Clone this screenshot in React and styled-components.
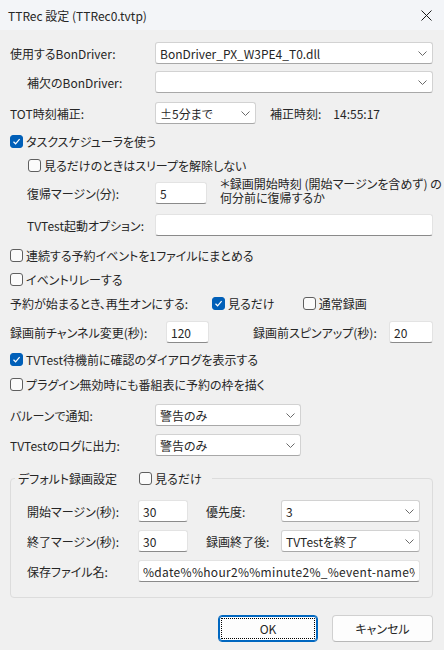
import React from 'react'
import styled, { createGlobalStyle } from 'styled-components'

const GlobalStyle = createGlobalStyle`
  html, body {
    margin: 0;
    padding: 0;
    background: #f0f0f0;
  }
  body {
    font-family: "Noto Sans CJK JP", "Noto Sans", sans-serif;
    font-size: 12px;
    font-weight: 400;
    font-feature-settings: "palt";
    color: #262626;
  }
`

const Window = styled.div`
  width: 444px;
  height: 650px;
  background: #f0f0f0;
  display: flex;
  flex-direction: column;
  overflow: hidden;
`

const TitleBar = styled.div`
  height: 30px;
  flex-shrink: 0;
  display: flex;
  align-items: center;
  justify-content: space-between;
  padding: 0 8px 0 8px;
  background: #f3f5f8;
  font-size: 12px;
`

const CloseButton = styled.span`
  display: inline-flex;
  width: 20px;
  justify-content: center;
`

const Content = styled.div`
  padding: 0 11px 0 10px;
  display: flex;
  flex-direction: column;
`

const Row = styled.div`
  display: flex;
  align-items: center;
  height: ${p => p.$h || 22}px;
  margin-top: ${p => p.$top || 0}px;
  padding-left: ${p => p.$indent || 0}px;
  white-space: nowrap;
`

const Label = styled.span`
  flex: 0 0 ${p => p.$w}px;
  margin-left: ${p => p.$ml || 0}px;
`

const Text = styled.span`
  margin-left: ${p => p.$ml || 0}px;
`

const Field = styled.input`
  box-sizing: border-box;
  height: 22px;
  flex: ${p => (p.$w ? 'none' : '1 1 0')};
  width: ${p => (p.$w ? `${p.$w}px` : 'auto')};
  min-width: 0;
  margin-left: ${p => p.$ml || 0}px;
  border: 1px solid #e3e3e3;
  border-bottom-color: #8a8a8a;
  border-radius: 3px;
  background: #ffffff;
  padding: 0 4px;
  font: inherit;
  font-feature-settings: "palt";
  letter-spacing: ${p => p.$ls || 0}px;
  color: #262626;
  outline: none;
`

const ComboBox = styled.div`
  box-sizing: border-box;
  height: 22px;
  flex: ${p => (p.$w ? 'none' : '1 1 0')};
  width: ${p => (p.$w ? `${p.$w}px` : 'auto')};
  min-width: 0;
  overflow: hidden;
  margin-left: ${p => p.$ml || 0}px;
  display: flex;
  align-items: center;
  justify-content: space-between;
  padding: 0 5px 0 4px;
  border: 1px solid #d2d2d2;
  border-bottom-color: #a8a8a8;
  border-radius: 3px;
  background: #ffffff;
`

const Note = styled.div`
  margin-left: 13px;
  line-height: 14px;
  margin-top: -4px;
`

const CheckLabel = styled.label`
  display: inline-flex;
  align-items: center;
  margin-left: ${p => p.$ml || 0}px;
`

const Box = styled.span`
  box-sizing: border-box;
  width: 13px;
  height: 13px;
  border-radius: 3px;
  border: 1px solid ${p => (p.$checked ? '#005fb8' : '#5f5f5f')};
  background: ${p => (p.$checked ? '#005fb8' : '#fbfbfb')};
  display: inline-flex;
  align-items: center;
  justify-content: center;
  margin-right: 3px;
  flex-shrink: 0;
`

const GroupBox = styled.div`
  margin-top: 22px;
  border: 1px solid #dcdcdc;
  border-radius: 4px;
  padding: 0 12px 15px 16px;
  display: flex;
  flex-direction: column;
`

const GroupTitle = styled.div`
  align-self: flex-start;
  display: flex;
  align-items: center;
  height: 20px;
  margin: -11px 0 0 -12px;
  padding: 0 10px 0 3px;
  background: #f0f0f0;
  white-space: nowrap;
`

const ButtonBar = styled.div`
  display: flex;
  justify-content: flex-end;
  gap: 14px;
  margin-top: 17px;
`

const Button = styled.button`
  box-sizing: border-box;
  width: ${p => p.$w}px;
  height: 27px;
  border-radius: 4px;
  background: #fdfdfd;
  font: inherit;
  font-feature-settings: "palt";
  color: #262626;
  border: 1px solid ${p => (p.$primary ? '#0067c0' : '#d0d0d0')};
  border-bottom-color: ${p => (p.$primary ? '#0067c0' : '#b8b8b8')};
  box-shadow: ${p => (p.$primary ? 'inset 0 0 0 1px #0067c0' : 'none')};
  outline: ${p => (p.$primary ? '1px dotted #000' : 'none')};
  outline-offset: -4px;
  padding: 0;
`

function Chevron () {
  return (
    <svg width="9" height="5" viewBox="0 0 9 5">
      <path d="M0.5 0.5 L4.5 4.5 L8.5 0.5" fill="none" stroke="#6a6a6a" strokeWidth="1" />
    </svg>
  )
}

function Combo ({ value, w, ml }) {
  return (
    <ComboBox $w={w} $ml={ml}>
      <span>{value}</span>
      <Chevron />
    </ComboBox>
  )
}

function Check ({ checked, children, ml }) {
  return (
    <CheckLabel $ml={ml}>
      <Box $checked={checked}>
        {checked && (
          <svg width="9" height="9" viewBox="0 0 9 9">
            <path d="M1.5 4.8 L3.6 6.8 L7.6 2.2" fill="none" stroke="#ffffff" strokeWidth="1.2" />
          </svg>
        )}
      </Box>
      {children}
    </CheckLabel>
  )
}

export default function App () {
  return (
    <>
      <GlobalStyle />
      <Window>
        <TitleBar>
          <span>TTRec 設定 (TTRec0.tvtp)</span>
          <CloseButton>
            <svg width="11" height="11" viewBox="0 0 11 11">
              <path d="M0.5 0.5 L10.5 10.5 M10.5 0.5 L0.5 10.5" stroke="#1a1a1a" strokeWidth="1" />
            </svg>
          </CloseButton>
        </TitleBar>

        <Content>
          <Row $top={12}>
            <Label $w={145}>使用するBonDriver:</Label>
            <Combo value="BonDriver_PX_W3PE4_T0.dll" />
          </Row>
          <Row $top={7} $indent={17}>
            <Label $w={128}>補欠のBonDriver:</Label>
            <Combo value="" />
          </Row>
          <Row $top={9}>
            <Label $w={145}>TOT時刻補正:</Label>
            <Combo value="±5分まで" w={101} />
            <Text $ml={14}>補正時刻:</Text>
            <Text $ml={12}>14:55:17</Text>
          </Row>

          <Row $top={7} $h={20}>
            <Check checked>タスクスケジューラを使う</Check>
          </Row>
          <Row $top={4} $h={20} $indent={18}>
            <Check>見るだけのときはスリープを解除しない</Check>
          </Row>
          <Row $top={4} $h={28} $indent={17}>
            <Label $w={128}>復帰マージン(分):</Label>
            <Field $w={52} readOnly value="5" />
            <Note>
              ＊録画開始時刻 (開始マージンを含めず) の<br />何分前に復帰するか
            </Note>
          </Row>
          <Row $top={7} $indent={17}>
            <Label $w={128}>TVTest起動オプション:</Label>
            <Field readOnly value="" />
          </Row>

          <Row $top={9} $h={20}>
            <Check>連続する予約イベントを1ファイルにまとめる</Check>
          </Row>
          <Row $top={4} $h={20}>
            <Check>イベントリレーする</Check>
          </Row>
          <Row $top={4} $h={20}>
            <Label $w={202}>予約が始まるとき、再生オンにする:</Label>
            <Check checked>見るだけ</Check>
            <Check ml={28}>通常録画</Check>
          </Row>
          <Row $top={8}>
            <Label $w={156}>録画前チャンネル変更(秒):</Label>
            <Field $w={43} readOnly value="120" />
            <Label $w={136} $ml={44}>録画前スピンアップ(秒):</Label>
            <Field $w={44} readOnly value="20" />
          </Row>
          <Row $top={6} $h={20}>
            <Check checked>TVTest待機前に確認のダイアログを表示する</Check>
          </Row>
          <Row $top={5} $h={20}>
            <Check>プラグイン無効時にも番組表に予約の枠を描く</Check>
          </Row>
          <Row $top={10}>
            <Label $w={145}>バルーンで通知:</Label>
            <Combo value="警告のみ" w={146} />
          </Row>
          <Row $top={8}>
            <Label $w={145}>TVTestのログに出力:</Label>
            <Combo value="警告のみ" w={146} />
          </Row>

          <GroupBox>
            <GroupTitle>
              <span>デフォルト録画設定</span>
              <Check ml={22}>見るだけ</Check>
            </GroupTitle>
            <Row $top={12}>
              <Label $w={111}>開始マージン(秒):</Label>
              <Field $w={50} readOnly value="30" />
              <Label $w={75} $ml={18}>優先度:</Label>
              <Combo value="3" />
            </Row>
            <Row $top={8}>
              <Label $w={111}>終了マージン(秒):</Label>
              <Field $w={50} readOnly value="30" />
              <Label $w={75} $ml={18}>録画終了後:</Label>
              <Combo value="TVTestを終了" />
            </Row>
            <Row $top={8}>
              <Label $w={111}>保存ファイル名:</Label>
              <Field $ls={0.3} readOnly value="%date%%hour2%%minute2%_%event-name%.ts" />
            </Row>
          </GroupBox>

          <ButtonBar>
            <Button $primary $w={100}>OK</Button>
            <Button $w={101}>キャンセル</Button>
          </ButtonBar>
        </Content>
      </Window>
    </>
  )
}
